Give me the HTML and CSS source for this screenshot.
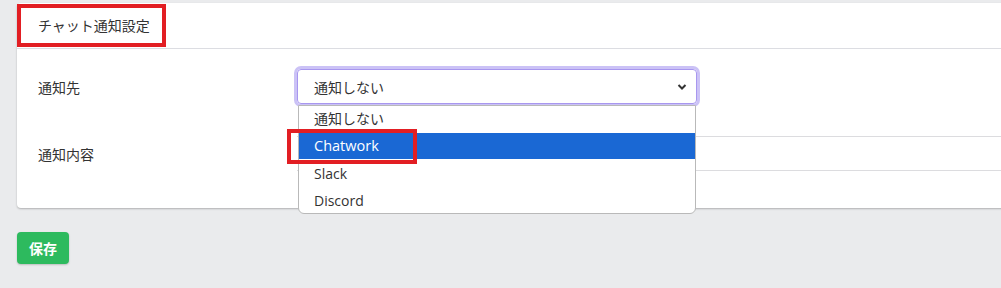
FILE: index.html
```html
<!DOCTYPE html>
<html lang="ja">
<head>
    <meta charset="UTF-8">
    <meta name="viewport" content="width=device-width, initial-scale=1.0">
    <title>チャット通知設定</title>
    <link rel="stylesheet" href="styles.css">
</head>
<body>
    <div class="page">
        <div class="card">
            <div class="card-header">
                <div class="card-title">チャット通知設定</div>
            </div>
            <div class="card-body">
                <div class="form-row">
                    <div class="form-label">通知先</div>
                    <div class="select-wrap">
                        <div class="select-box">
                            <span>通知しない</span>
                            <svg class="chevron" width="10" height="8" viewBox="0 0 10 8">
                                <path d="M1.5 2 L5 5.5 L8.5 2" fill="none" stroke="#333" stroke-width="2"/>
                            </svg>
                        </div>
                        <ul class="dropdown">
                            <li>通知しない</li>
                            <li class="selected">Chatwork<span class="mark"></span></li>
                            <li>Slack</li>
                            <li>Discord</li>
                        </ul>
                    </div>
                </div>
                <div class="form-row">
                    <div class="form-label">通知内容</div>
                    <div class="text-input"></div>
                </div>
            </div>
        </div>
        <button class="btn-save">保存</button>
    </div>
</body>
</html>
```
FILE: styles.css
```css
html, body {
    margin: 0;
    padding: 0;
    overflow: hidden;
}
body {
    font-family: "Open Sans", "Noto Sans CJK JP", sans-serif;
    font-size: 14px;
    color: #333;
    background-color: #eaebed;
    height: 288px;
}
.page {
    padding: 3px 0 0 17px;
}
.card {
    background-color: #fff;
    border-radius: 4px 0 0 4px;
    box-shadow: 0 1px 2px rgba(0,0,0,0.25);
    margin-right: -20px;
}
.card-header {
    height: 44px;
    border-bottom: 1px solid #dcdde2;
    padding-top: 1px;
}
.card-title {
    display: inline-block;
    box-sizing: border-box;
    height: 43px;
    line-height: 35px;
    padding: 0 12px 0 17px;
    border: 4px solid #e21e23;
    font-family: "Noto Sans CJK JP", sans-serif;
    font-size: 14px;
}
.card-body {
    padding: 20px 0 37px 21px;
    display: flex;
    flex-direction: column;
    gap: 32px;
}
.form-row {
    display: flex;
    align-items: center;
}
.form-label {
    width: 259px;
    font-family: "Noto Sans CJK JP", sans-serif;
}
.select-wrap {
    position: relative;
    z-index: 2;
}
.select-box {
    box-sizing: border-box;
    width: 400px;
    height: 35px;
    border: 1px solid #a897ef;
    border-radius: 4px;
    box-shadow: 0 0 0 3px #cbc2f6;
    display: flex;
    align-items: center;
    justify-content: space-between;
    padding: 0 9px 0 16px;
    font-family: "Noto Sans CJK JP", sans-serif;
}
.dropdown {
    position: absolute;
    top: 36px;
    left: 1px;
    width: 398px;
    box-sizing: border-box;
    margin: 0;
    padding: 0;
    list-style: none;
    background: #fff;
    border: 1px solid #b9b9b9;
    border-radius: 0 0 6px 6px;
}
.dropdown li {
    height: 27px;
    line-height: 30px;
    padding-left: 15px;
    position: relative;
}
.dropdown li:first-child {
    height: 27px;
    line-height: 24px;
    font-family: "Noto Sans CJK JP", sans-serif;
}
.dropdown li.selected {
    background-color: #1a68d4;
    color: #fff;
    height: 26px;
    line-height: 26px;
    font-size: 14.5px;
}
.mark {
    position: absolute;
    left: -12px;
    top: -4px;
    width: 122px;
    height: 27px;
    border: 4px solid #e21e23;
}
.text-input {
    flex: 1;
    height: 33px;
    border-top: 1px solid #dcdcdf;
    border-bottom: 1px solid #dcdcdf;
}
.btn-save {
    margin-top: 24px;
    width: 52px;
    height: 32px;
    border: none;
    border-radius: 4px;
    background-color: #2dba5e;
    color: #fff;
    font-family: "Noto Sans CJK JP", sans-serif;
    font-weight: bold;
    font-size: 14px;
    box-shadow: 0 1px 2px rgba(0,0,0,0.2);
    padding: 0;
}
```
